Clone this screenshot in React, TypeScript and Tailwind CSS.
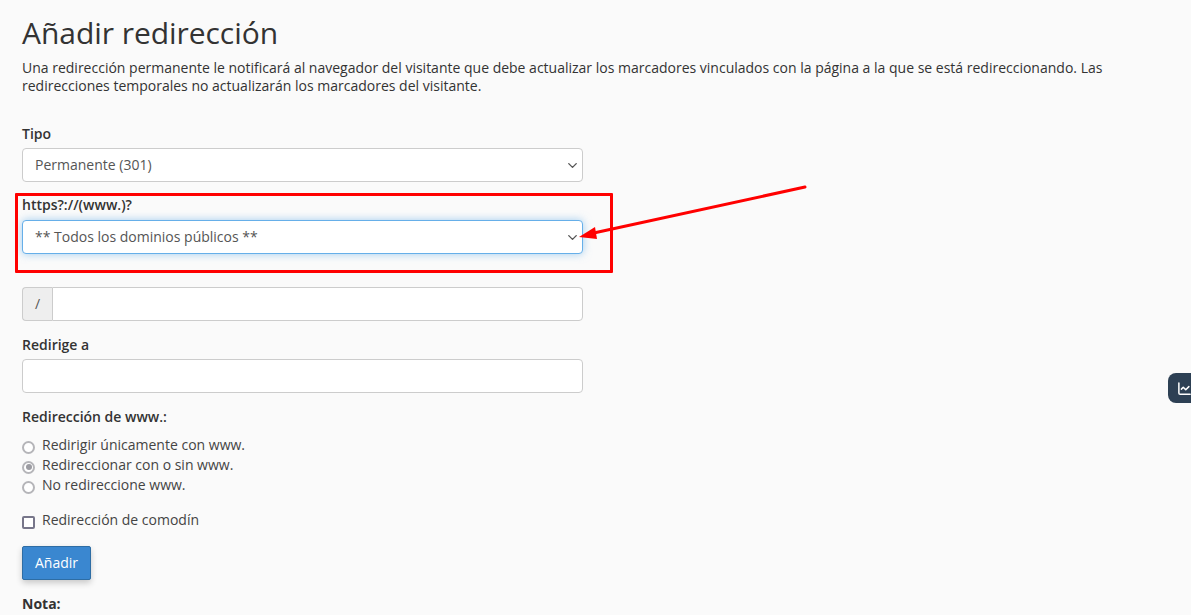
import React from 'react';
import { ChevronDown, ChartLine } from 'lucide-react';

const labelClass = 'block text-sm font-semibold text-[#333] leading-5';
const boxClass = 'h-[34px] w-full rounded border border-[#ccc] bg-white';

const FakeSelect: React.FC<{ text: string; focused?: boolean }> = ({ text, focused }) => (
  <div
    className={
      focused
        ? 'flex h-[34px] w-full items-center justify-between rounded border border-[#66afe9] bg-white pl-3 pr-[2px] shadow-[0_0_8px_rgba(102,175,233,0.6)]'
        : 'flex h-[34px] w-full items-center justify-between rounded border border-[#ccc] bg-white pl-3 pr-[2px]'
    }
  >
    <span className="text-sm text-[#555]">{text}</span>
    <ChevronDown className="h-[15px] w-[15px] text-[#555]" strokeWidth={2.2} />
  </div>
);

const Radio: React.FC<{ label: string; checked?: boolean }> = ({ label, checked }) => (
  <div className="flex h-5 items-center gap-[7px]">
    <span className="mt-[4px] flex h-[13px] w-[13px] items-center justify-center rounded-full border-2 border-[#b5b5b9] bg-white">
      {checked && <span className="h-[6px] w-[6px] rounded-full bg-[#9c9ca2]" />}
    </span>
    <span className="text-sm text-[#444]">{label}</span>
  </div>
);

const App: React.FC = () => {
  return (
    <div className="relative h-[615px] w-[1191px] overflow-hidden bg-[#fafafa] font-['Open_Sans',sans-serif] text-[#333]">
      <div className="pl-[22px] pt-[13px]">
        {/* Header */}
        <h1 className="text-[30px] font-normal leading-[40px] tracking-[-0.05px] text-[#333]">Añadir redirección</h1>
        <p className="mt-[6px] w-[1100px] text-sm leading-[18px] text-[#333]">
          Una redirección permanente le notificará al navegador del visitante que debe actualizar los marcadores
          vinculados con la página a la que se está redireccionando. Las redirecciones temporales no actualizarán los
          marcadores del visitante.
        </p>

        {/* Form */}
        <div className="mt-[29px] w-[561px]">
          <label className={labelClass}>Tipo</label>
          <div className="mt-1">
            <FakeSelect text="Permanente (301)" />
          </div>

          <label className={`${labelClass} mt-[13px]`}>https?://(www.)?</label>
          <div className="mt-[5px]">
            <FakeSelect text="** Todos los dominios públicos **" focused />
          </div>

          <div className="mt-[33px] flex h-[34px]">
            <span className="flex w-[30px] items-center justify-center rounded-l border border-r-0 border-[#ccc] bg-[#eee] text-sm text-[#555]">
              /
            </span>
            <div className="flex-1 rounded-r border border-[#ccc] bg-white" />
          </div>

          <label className={`${labelClass} mt-[14px]`}>Redirige a</label>
          <div className={`${boxClass} mt-1`} />

          <label className={`${labelClass} mt-[14px]`}>Redirección de www.:</label>
          <div className="mt-[8px]">
            <Radio label="Redirigir únicamente con www." />
            <Radio label="Redireccionar con o sin www." checked />
            <Radio label="No redireccione www." />
          </div>

          <div className="mt-[15px] flex h-5 items-center gap-[7px]">
            <span className="mt-[4px] h-[13px] w-[13px] rounded-[2px] border-2 border-[#77768a] bg-white" />
            <span className="text-sm text-[#444]">Redirección de comodín</span>
          </div>

          <button className="mt-4 flex h-[34px] w-[69px] items-center justify-center rounded-[2px] border border-[#2e6da4] bg-[#3a87d0] text-sm text-white shadow-[0_3px_6px_rgba(0,0,0,0.2)]">
            Añadir
          </button>

          <p className="mt-[14px] text-sm font-bold leading-5 text-[#333]">Nota:</p>
        </div>
      </div>

      {/* Side tab */}
      <div className="absolute left-[1168px] top-[373px] flex h-[30px] w-[23px] items-center rounded-l-lg bg-[#2d4054] pl-[9px]">
        <ChartLine className="h-[15px] w-[15px] shrink-0 text-white" strokeWidth={2.4} />
      </div>

      {/* Red annotation */}
      <div className="pointer-events-none absolute left-[15px] top-[193px] h-[80px] w-[598px] rounded-[1px] border-[3px] border-[#f00]" />
      <svg className="pointer-events-none absolute left-0 top-0" width="1191" height="615">
        <line x1="805" y1="187" x2="596" y2="232.5" stroke="#f00" strokeWidth="3" strokeLinecap="round" />
        <polygon points="579,237 595,227 597,239" fill="#f00" />
      </svg>
    </div>
  );
};

export default App;
